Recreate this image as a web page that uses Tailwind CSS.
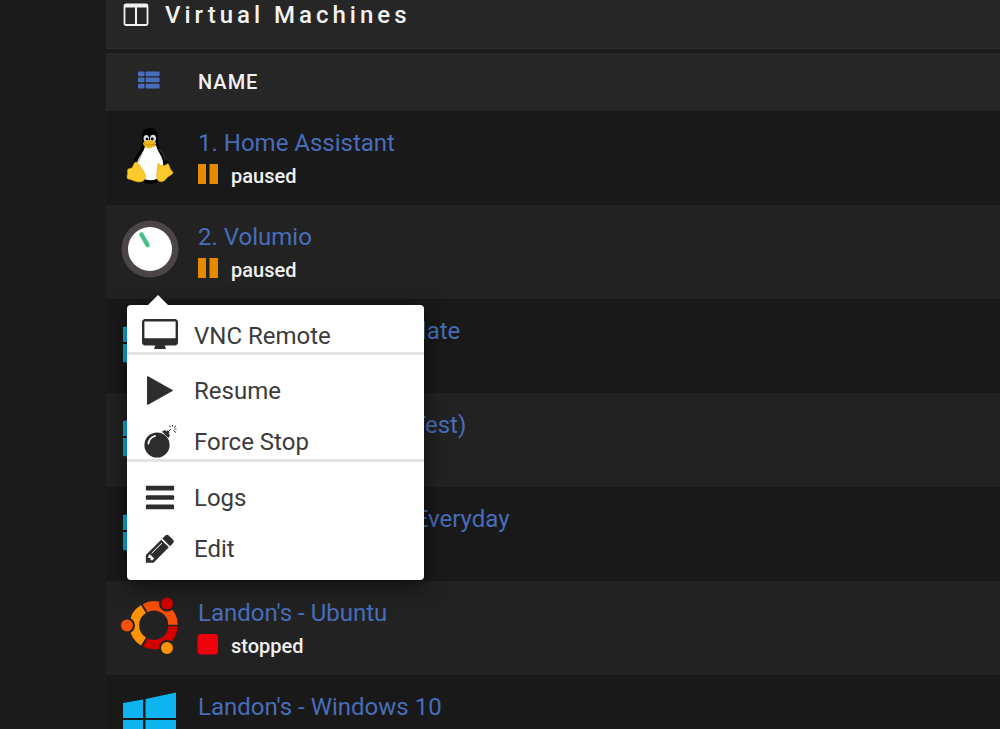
<!DOCTYPE html>
<html lang="en">
<head>
  <meta charset="UTF-8" />
  <meta name="viewport" content="width=device-width, initial-scale=1.0" />
  <title>Virtual Machines</title>
  <script src="https://cdn.jsdelivr.net/npm/@tailwindcss/browser@4"></script>
</head>
<body class="bg-[#1b1b1b] text-[#f2f2f2] font-[Roboto,sans-serif] h-screen overflow-hidden">
  <!-- shared icons -->
  <svg class="hidden">
    <symbol id="windows" viewBox="0 0 58 58">
      <path fill="#0db4f0" d="M2 12L22 8.500V27H2zM24.500 8L55 1.500V27H24.500zM2 29H22V49.500L2 47zM24.500 29H55V55.500L24.500 50z" />
    </symbol>
    <symbol id="pause" viewBox="0 0 22 22">
      <path fill="#e68a00" d="M1 1h8v20h-8zM12.500 1h8.500v20h-8.500z" />
    </symbol>
  </svg>

  <main class="relative ml-[106px]">
    <header class="flex h-[49px] items-start gap-4 border-b border-[#2d2d2d] bg-[#262626] pl-[17px]">
      <svg class="mt-[3px] h-6 w-[26px]" viewBox="0 0 26 24" fill="none">
        <rect x="1.500" y="1.500" width="23" height="20.500" rx="1.500" stroke="currentColor" stroke-width="1.800" />
        <path d="M1 1.500h24v3h-24z" fill="currentColor" />
        <path d="M13 3v19" stroke="currentColor" stroke-width="2" />
      </svg>
      <h1 class="text-[24px] leading-[30px] font-medium tracking-[4px]">Virtual Machines</h1>
    </header>

    <table class="mt-1 w-full border-collapse text-left">
      <thead>
        <tr class="h-[58px] bg-[#262626]">
          <th class="w-[92px] pl-8">
            <button class="block text-[#486dba]" aria-label="Toggle view">
              <svg class="mb-1 h-[18px] w-[22px]" viewBox="0 0 22 18" fill="currentColor">
                <rect y="0.500" width="6.500" height="4.700" rx="1" /><rect x="7.600" y="0.500" width="14" height="4.700" rx="1" />
                <rect y="6.600" width="6.500" height="4.700" rx="1" /><rect x="7.600" y="6.600" width="14" height="4.700" rx="1" />
                <rect y="12.700" width="6.500" height="4.700" rx="1" /><rect x="7.600" y="12.700" width="14" height="4.700" rx="1" />
              </svg>
            </button>
          </th>
          <th class="text-[20px] font-medium tracking-wider">NAME</th>
        </tr>
      </thead>
      <tbody class="align-top [&>tr]:h-[94px] [&>tr:nth-child(odd)]:bg-[#191919] [&>tr:nth-child(even)]:bg-[#222222]">
        <tr>
          <td class="pt-4 pl-[15px]">
            <svg class="size-[58px]" viewBox="0 0 58 58">
              <path fill="#000" d="M29 1C22.500 1 20.500 6 21 12c.4 6-.5 9-4 14-3.500 5-6.500 12-5 19l8 9c5 4 14 4 18 0l9-8c1-8-1-15-6-21-3-4-4-7-4-13 0-7-2.500-11-8-11z" />
              <path fill="#fff" d="M24 19c3 3 7 2 11-1 1 6 6 10 7 17 1 6-1 11-5 16-4 3-11 3-15 0-6-5-8-10-5-18 2-5 6-8 7-14z" />
              <ellipse cx="25.300" cy="11.500" rx="2.700" ry="3.600" fill="#ddd" />
              <ellipse cx="32" cy="11.500" rx="3" ry="3.800" fill="#ddd" />
              <circle cx="26" cy="12" r="1.300" /><circle cx="31.300" cy="12" r="1.400" />
              <path fill="#f5b81c" d="M22 16c1-2 4-3 6-3s7 2 7 3-1 3-3 4-4 2-6 1-4-3-4-5z" />
              <path fill="none" stroke="#b57708" stroke-width=".7" d="M23 16.500c3 2 7 2 11 .3" />
              <path fill="#fccb2b" stroke="#d99a0c" stroke-width=".6" d="M15 35c3 1 5 6 8 10 3 5 1 10-5 10-4 0-8-3-11-3-2-1 0-5-.500-8 0-3 2-2 4-3s2-6 4.500-6z" />
              <path fill="#fccb2b" stroke="#d99a0c" stroke-width=".6" d="M37 36c2 3 5 4 9 1 2-1 2 2 3 4 1 3 3 3 3 5-1 2-5 3-7 6-3 4-8 3-9 0-1-4 1-11 1-16z" />
              <path fill="none" stroke="#777" stroke-width=".6" d="M38 22c4 4 6 8 6 12M21 27c-2 3-3 5-3 8" />
            </svg>
          </td>
          <td class="pt-4">
            <a href="#" class="block text-[24px] leading-8 text-[#486dba]">1. Home Assistant</a>
            <div class="flex items-center gap-3 text-[20px] leading-[34px] font-medium"><svg class="-ml-px -mt-1 size-[22px]"><use href="#pause" /></svg>paused</div>
          </td>
        </tr>
        <tr>
          <td class="pt-[15px] pl-[15px]">
            <svg class="size-[58px]" viewBox="0 0 58 58">
              <circle cx="29" cy="29" r="28.500" fill="#4c4545" />
              <circle cx="29" cy="29" r="22" fill="#fff" />
              <path d="M20.500 14.500L26.500 25" stroke="#45c08a" stroke-width="4.500" stroke-linecap="round" />
            </svg>
          </td>
          <td class="pt-4">
            <a href="#" class="block text-[24px] leading-8 text-[#486dba]">2. Volumio</a>
            <div class="flex items-center gap-3 text-[20px] leading-[34px] font-medium"><svg class="-ml-px -mt-1 size-[22px]"><use href="#pause" /></svg>paused</div>
          </td>
        </tr>
        <tr>
          <td class="pt-4 pl-[15px]"><svg class="size-[58px]"><use href="#windows" /></svg></td>
          <td class="pt-4"><a href="#" class="block text-[24px] leading-8 text-[#486dba]">Windows 10 IT Template</a></td>
        </tr>
        <tr>
          <td class="pt-4 pl-[15px]"><svg class="size-[58px]"><use href="#windows" /></svg></td>
          <td class="pt-4"><a href="#" class="block text-[24px] leading-8 text-[#486dba]">Windows 10 (Game Test)</a></td>
        </tr>
        <tr>
          <td class="pt-4 pl-[15px]"><svg class="size-[58px]"><use href="#windows" /></svg></td>
          <td class="pt-4"><a href="#" class="block text-[24px] leading-8 text-[#486dba]">Landon's - Windows Everyday</a></td>
        </tr>
        <tr>
          <td class="pt-4 pl-[15px]">
            <svg class="size-[58px]" viewBox="0 0 58 58">
              <g fill="none" stroke-width="9.500">
                <path stroke="#f94f05" d="M23.500 11.500A19 19 0 0 1 52 28" />
                <path stroke="#d40000" d="M52 29A19 19 0 0 1 23.500 45" />
                <path stroke="#ff9207" d="M22.500 44.500A19 19 0 0 1 22.500 12" />
              </g>
              <path d="M46 28.500h12M20 6l8 13M20 51l8-13" stroke="#222" stroke-width="1.500" />
              <g stroke="#222" stroke-width="2">
                <circle cx="6" cy="28.500" r="7" fill="#f94f05" />
                <circle cx="46" cy="6.500" r="7" fill="#d40000" />
                <circle cx="46" cy="51" r="7" fill="#ff9207" />
              </g>
            </svg>
          </td>
          <td class="pt-4">
            <a href="#" class="block text-[24px] leading-8 text-[#486dba]">Landon's - Ubuntu</a>
            <div class="flex items-center gap-3 text-[20px] leading-[34px] font-medium"><svg class="-ml-px -mt-1 size-[22px]" viewBox="0 0 22 22"><rect x="0.500" y="1" width="20.500" height="20.500" rx="3.500" fill="#f0000c" /></svg>stopped</div>
          </td>
        </tr>
        <tr>
          <td class="pt-4 pl-[15px]"><svg class="size-[58px]"><use href="#windows" /></svg></td>
          <td class="pt-4"><a href="#" class="block text-[24px] leading-8 text-[#486dba]">Landon's - Windows 10</a></td>
        </tr>
      </tbody>
    </table>

    <!-- context menu -->
    <nav class="absolute top-[305px] left-[21px] w-[297px] rounded bg-white pt-[5px] pb-1.5 text-[24px] text-[#3b3b3b] shadow-[0_6px_22px_rgba(0,0,0,0.6)]">
      <svg class="absolute -top-[10px] left-5 h-[11px] w-[22px]" viewBox="0 0 22 11"><path fill="#fff" d="M0 11L11 0l11 11z" /></svg>
      <button class="flex h-[51px] w-full items-center gap-4 pl-[15px]">
        <svg class="-mt-1 h-[30px] w-9" viewBox="0 0 1920 1600" fill="#2d2d2d"><path d="M1792 992v-832q0-13-9.500-22.500t-22.500-9.500h-1600q-13 0-22.500 9.500t-9.500 22.500v832q0 13 9.500 22.500t22.500 9.500h1600q13 0 22.500-9.500t9.500-22.500zm128-832v1088q0 66-47 113t-113 47h-544q0 37 16 77.500t32 71 16 43.500q0 26-19 45t-45 19h-512q-26 0-45-19t-19-45q0-14 16-44t32-70 16-78h-544q-66 0-113-47t-47-113v-1088q0-66 47-113t113-47h1600q66 0 113 47t47 113z" /></svg>
        VNC Remote
      </button>
      <hr class="-mt-[9px] mb-2.5 border-t-3 border-[#e4e4e4]" />
      <button class="flex h-[51px] w-full items-center gap-4 pl-[15px]">
        <svg class="h-[33px] w-9" viewBox="0 0 1792 1792" fill="#2d2d2d"><path d="M1576 927l-1328 738q-23 13-39.500 3t-16.500-36v-1472q0-26 16.500-36t39.500 3l1328 738q23 13 23 31t-23 31z" /></svg>
        Resume
      </button>
      <button class="flex h-[51px] w-full items-center gap-4 pl-[15px]">
        <svg class="h-[33px] w-9" viewBox="0 0 36 33" fill="#2d2d2d">
          <path d="M20 6.500l3-1.500 1.500 1.500 1.200-1.200 2 2-1.200 1.200 1.500 1.500-1.500 3z" />
          <circle cx="15" cy="20" r="12.600" />
          <path d="M6.500 18.500q.5-5.500 6.500-7.500" fill="none" stroke="#fff" stroke-width="1.800" stroke-linecap="round" />
          <path d="M25.500 7.500l3.500-3.500M28.500 2l-1-1.500M30.500 1.500v-1.500M32 2.500l2-1.800M32.500 4h2M31.500 5.500l2.500 2" fill="none" stroke="#2d2d2d" stroke-width="1" />
        </svg>
        Force Stop
      </button>
      <hr class="-mt-2 mb-2.5 border-t-3 border-[#e4e4e4]" />
      <button class="flex h-[51px] w-full items-center gap-4 pl-[15px]">
        <svg class="h-[33px] w-9" viewBox="0 0 1792 1792" fill="#2d2d2d"><rect x="128" y="256" width="1536" height="256" rx="64" /><rect x="128" y="768" width="1536" height="256" rx="64" /><rect x="128" y="1280" width="1536" height="256" rx="64" /></svg>
        Logs
      </button>
      <button class="flex h-[51px] w-full items-center gap-4 pl-[15px]">
        <svg class="h-[33px] w-9" viewBox="0 0 1792 1792" fill="#2d2d2d"><path d="M491 1536l91-91-235-235-91 91v107h128v128h107zm523-928q0-22-22-22-10 0-17 7l-542 542q-7 7-7 17 0 22 22 22 10 0 17-7l542-542q7-7 7-17zm-54-192l416 416-832 832h-416v-416zm683 96q0 53-37 90l-166 166-416-416 166-165q36-38 90-38 53 0 91 38l235 234q37 39 37 91z" /></svg>
        Edit
      </button>
    </nav>
  </main>
</body>
</html>
